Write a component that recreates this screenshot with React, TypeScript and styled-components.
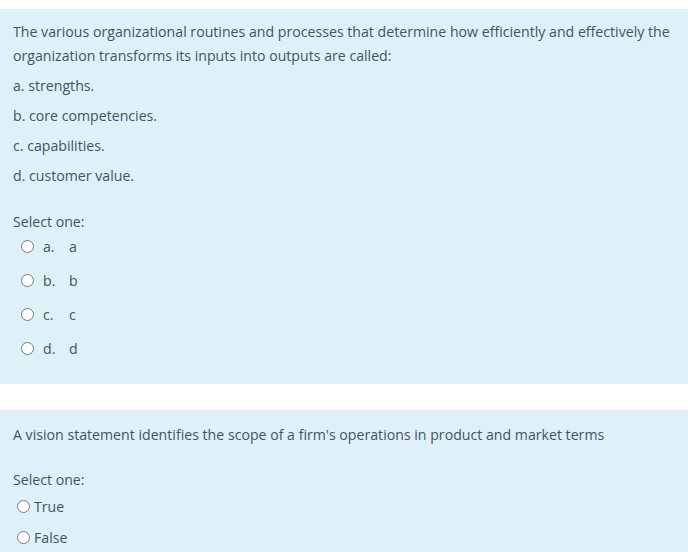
import React from "react";
import styled, { createGlobalStyle } from "styled-components";

const GlobalStyle = createGlobalStyle`
  html, body {
    margin: 0;
    padding: 0;
    background: #ffffff;
  }
  body {
    font-family: "Open Sans", "Noto Sans", "Liberation Sans", sans-serif;
    font-size: 14.15px;
    color: #44545f;
  }
`;

const Page = styled.div`
  padding-top: 9px;
  width: 688px;
  overflow: hidden;
`;

const Panel = styled.section<{ $padTop: number; $padBottom: number }>`
  background-color: #def1f8;
  padding: ${(p) => p.$padTop}px 8px ${(p) => p.$padBottom}px 13px;
  margin-bottom: 26px;
`;

const QuestionText = styled.p`
  margin: 0;
  line-height: 24px;
`;

const ChoiceList = styled.div`
  margin-top: 6px;
  display: flex;
  flex-direction: column;
  gap: 6px;
`;

const Choice = styled.div`
  line-height: 24px;
`;

const Prompt = styled.div<{ $gap: number }>`
  margin-top: ${(p) => p.$gap}px;
  line-height: 24px;
`;

const Answers = styled.div<{ $gap: number; $indent: number; $top: number }>`
  display: flex;
  flex-direction: column;
  gap: ${(p) => p.$gap}px;
  padding-left: ${(p) => p.$indent}px;
  margin-top: ${(p) => p.$top}px;
`;

const AnswerRow = styled.label<{ $height: number }>`
  display: flex;
  align-items: center;
  height: ${(p) => p.$height}px;
`;

const Radio = styled.span<{ $space: number }>`
  display: inline-block;
  box-sizing: border-box;
  width: 13px;
  height: 13px;
  border-radius: 50%;
  border: 1px solid #7b7b7b;
  background: #ffffff;
  margin-right: ${(p) => p.$space}px;
  flex-shrink: 0;
`;

const AnswerNumber = styled.span`
  width: 26px;
`;

const questionOneChoices = [
  "a. strengths.",
  "b. core competencies.",
  "c. capabilities.",
  "d. customer value.",
];

const letters = ["a", "b", "c", "d"];

const App: React.FC = () => {
  return (
    <>
      <GlobalStyle />
      <Page>
        <Panel $padTop={11} $padBottom={23}>
          <QuestionText>
            The various organizational routines and processes that determine how efficiently and
            effectively the organization transforms its inputs into outputs are called:
          </QuestionText>
          <ChoiceList>
            {questionOneChoices.map((c) => (
              <Choice key={c}>{c}</Choice>
            ))}
          </ChoiceList>
          <Prompt $gap={22}>Select one:</Prompt>
          <Answers $gap={8} $indent={8} $top={-1}>
            {letters.map((l) => (
              <AnswerRow key={l} $height={26}>
                <Radio $space={9} />
                <AnswerNumber>{l}.</AnswerNumber>
                <span>{l}</span>
              </AnswerRow>
            ))}
          </Answers>
        </Panel>
        <Panel $padTop={13} $padBottom={20}>
          <QuestionText>
            A vision statement identifies the scope of a firm's operations in product and market terms
          </QuestionText>
          <Prompt $gap={21}>Select one:</Prompt>
          <Answers $gap={7} $indent={4} $top={2}>
            {["True", "False"].map((t) => (
              <AnswerRow key={t} $height={24}>
                <Radio $space={4} />
                <span>{t}</span>
              </AnswerRow>
            ))}
          </Answers>
        </Panel>
      </Page>
    </>
  );
};

export default App;
